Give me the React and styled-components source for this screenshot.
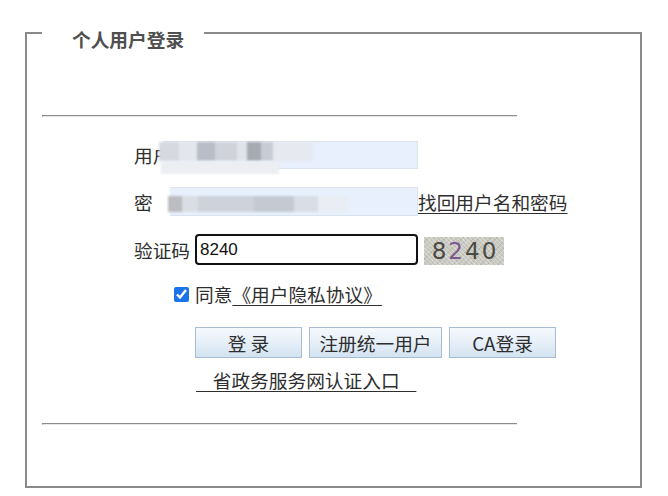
import React, { useState } from "react";
import styled, { createGlobalStyle } from "styled-components";

const GlobalStyle = createGlobalStyle`
  html, body {
    margin: 0;
    padding: 0;
    background: #fff;
  }
  body {
    font-family: "Noto Sans CJK SC", "Noto Sans", sans-serif;
    color: #333;
  }
`;

const Page = styled.div`
  padding: 14px 0 0 25px;
  width: 668px;
  height: 496px;
  box-sizing: border-box;
  overflow: hidden;
`;

const Frame = styled.fieldset`
  width: 617px;
  box-sizing: border-box;
  margin: 0;
  padding: 0 0 61px 15px;
  border: 2px solid #8a8a8a;
`;

const Legend = styled.legend`
  padding: 12px 20px 0 30px;
  font-size: 18.7px;
  line-height: 26px;
  font-weight: 700;
  color: #4f4f4f;
`;

const Rule = styled.hr`
  width: 474px;
  height: 0;
  margin: ${(p) => p.$top}px 0 0;
  border: none;
  border-top: 1px solid #8c8c8c;
  border-bottom: 1px solid #e8e8e8;
  border-left: 1px solid #8c8c8c;
`;

const Form = styled.div`
  display: flex;
  flex-direction: column;
  padding-left: 92px;
`;

const Row = styled.div`
  display: flex;
  align-items: center;
  height: ${(p) => p.$h}px;
  margin-top: ${(p) => p.$top}px;
  padding-left: ${(p) => p.$indent || 0}px;
  font-size: 18.7px;
  line-height: 26px;
  color: #2e2e2e;
`;

const Label = styled.span`
  white-space: nowrap;
  width: ${(p) => p.$w}px;
`;

const Field = styled.div`
  position: relative;
  width: ${(p) => p.$w}px;
  height: ${(p) => p.$h}px;
  box-sizing: border-box;
  background: #e8f0fe;
  border: 1px solid #dde3ec;
  border-left: none;
`;

const Mosaic = styled.div`
  position: absolute;
  left: ${(p) => p.$left}px;
  top: ${(p) => p.$top}px;
  display: flex;
  filter: blur(1.2px);
`;

const Block = styled.div`
  width: ${(p) => p.$w}px;
  height: ${(p) => p.$h}px;
  background: ${(p) => p.$c};
`;

const CodeInput = styled.input`
  width: 223px;
  height: 31px;
  box-sizing: border-box;
  border: 2px solid #111;
  border-radius: 4px;
  padding: 0 3px;
  font-family: "Liberation Sans", Arial, sans-serif;
  font-size: 17px;
  color: #111;
  outline: none;
  background: #fff;
`;

const Captcha = styled.div`
  margin: 3px 0 0 6px;
  width: 80px;
  height: 28px;
  display: flex;
  align-items: center;
  justify-content: center;
  gap: 2px;
  background-color: #c9c9c1;
  background-image: repeating-linear-gradient(
      45deg,
      rgba(255, 255, 255, 0.3) 0 1px,
      transparent 1px 3px
    ),
    repeating-linear-gradient(
      -45deg,
      rgba(0, 0, 0, 0.08) 0 1px,
      transparent 1px 4px
    );
  font-family: "DejaVu Sans", "Liberation Sans", sans-serif;
  font-size: 23px;
  line-height: 28px;
`;

const Digit = styled.span`
  color: ${(p) => p.$c || "#4a4a45"};
`;

const Link = styled.a`
  color: #2e2e2e;
  text-decoration: underline;
  text-underline-offset: 3px;
  text-decoration-thickness: 1px;
  cursor: pointer;
  white-space: nowrap;
`;

const Check = styled.input`
  width: 15px;
  height: 15px;
  margin: 0 6px 0 0;
  accent-color: #1a73e8;
`;

const Buttons = styled.div`
  display: flex;
  gap: 7px;
`;

const Button = styled.button`
  width: ${(p) => p.$w}px;
  height: 31px;
  padding: 0;
  border: 1px solid #a9bdd2;
  background: linear-gradient(#f6f9fc 0%, #e6eff8 50%, #d3e3f1 100%);
  font-family: "Noto Sans CJK SC", sans-serif;
  font-size: 18.7px;
  color: #2e2e2e;
  cursor: pointer;
`;

const userBlocks = [
  ["#d6d9df", 20],
  ["#e3e6eb", 18],
  ["#b9bdc6", 18],
  ["#d0d3db", 22],
  ["#e0e3e9", 10],
  ["#a6aab3", 14],
  ["#c8ccd5", 12],
  ["#e6e9ef", 40],
];

const passBlocks = [
  ["#bcbdc1", 14],
  ["#dadde4", 16],
  ["#ced2db", 56],
  ["#c5c9d2", 40],
  ["#d9dde5", 24],
  ["#eaedf3", 30],
];

export default function App() {
  const [code, setCode] = useState("8240");
  const [agree, setAgree] = useState(true);

  return (
    <>
      <GlobalStyle />
      <Page>
        <Frame>
          <Legend>个人用户登录</Legend>
          <Rule $top={63} />
          <Form>
            <Row $h={28} $top={24}>
              <Label $w={29}>用户</Label>
              <Field $w={255} $h={28}>
                <Mosaic $left={-4} $top={0}>
                  {userBlocks.map(([c, w], i) => (
                    <Block key={i} $c={c} $w={w} $h={19} />
                  ))}
                </Mosaic>
                <Mosaic $left={-2} $top={19}>
                  <Block $c="#eceef2" $w={118} $h={13} />
                </Mosaic>
              </Field>
            </Row>
            <Row $h={29} $top={18}>
              <Label $w={36}>密</Label>
              <Field $w={248} $h={29}>
                <Mosaic $left={-2} $top={8}>
                  {passBlocks.map(([c, w], i) => (
                    <Block key={i} $c={c} $w={w} $h={16} />
                  ))}
                </Mosaic>
              </Field>
              <Link>找回用户名和密码</Link>
            </Row>
            <Row $h={31} $top={18}>
              <Label $w={61}>验证码</Label>
              <CodeInput value={code} onChange={(e) => setCode(e.target.value)} />
              <Captcha>
                <Digit>8</Digit>
                <Digit $c="#7b5a8c">2</Digit>
                <Digit>4</Digit>
                <Digit>0</Digit>
              </Captcha>
            </Row>
            <Row $h={22} $top={18} $indent={40}>
              <Check
                type="checkbox"
                checked={agree}
                onChange={(e) => setAgree(e.target.checked)}
              />
              <span>同意</span>
              <Link>《用户隐私协议》</Link>
            </Row>
            <Row $h={31} $top={22} $indent={61}>
              <Buttons>
                <Button $w={107}>登 录</Button>
                <Button $w={133}>注册统一用户</Button>
                <Button $w={107}>CA登录</Button>
              </Buttons>
            </Row>
            <Row $h={26} $top={9} $indent={62}>
              <Link>
                &nbsp;&nbsp;&nbsp;&nbsp;省政务服务网认证入口&nbsp;&nbsp;&nbsp;&nbsp;
              </Link>
            </Row>
          </Form>
          <Rule $top={30} />
        </Frame>
      </Page>
    </>
  );
}
